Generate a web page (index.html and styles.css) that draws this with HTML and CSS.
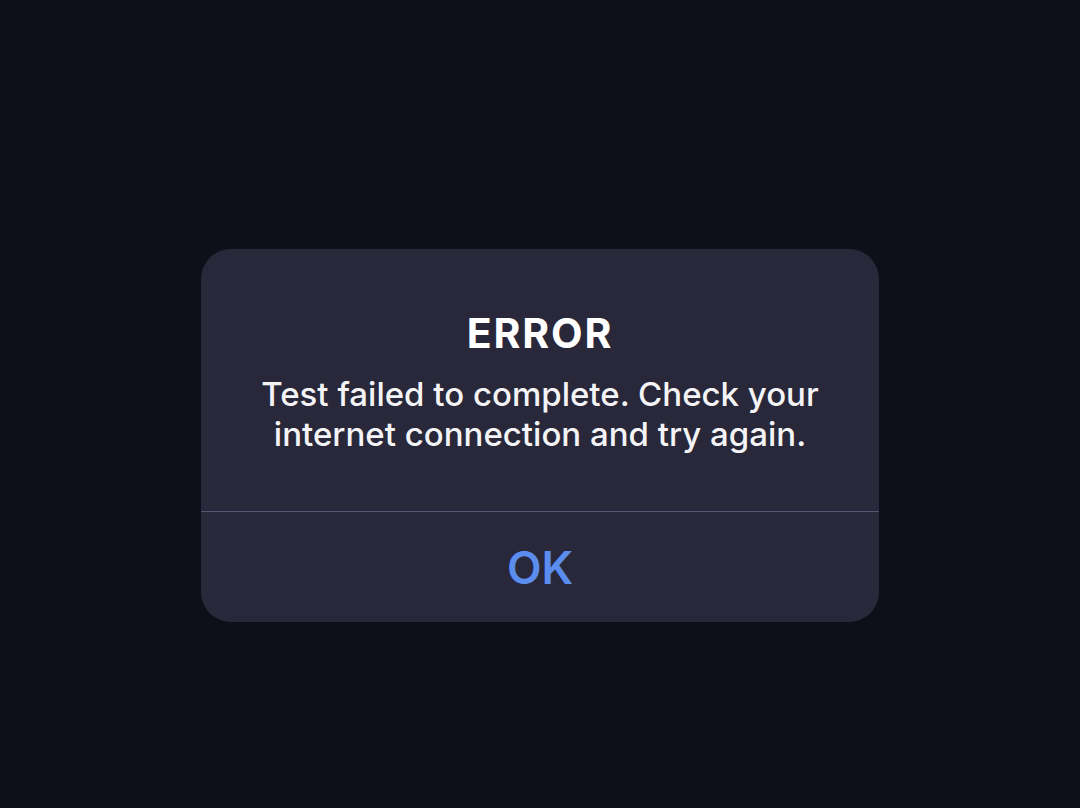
FILE: index.html
```html
<!DOCTYPE html>
<html lang="en">
<head>
<meta charset="utf-8">
<title>Error</title>
<link rel="stylesheet" href="styles.css">
</head>
<body>
  <div class="screen">
    <div class="alert" role="alertdialog">
      <div class="alert-body">
        <h1 class="alert-title">ERROR</h1>
        <p class="alert-message">Test failed to complete. Check your internet connection and try again.</p>
      </div>
      <button class="alert-button" type="button">OK</button>
    </div>
  </div>
</body>
</html>
```

FILE: styles.css
```css
html, body {
  margin: 0;
  padding: 0;
  background: #0f0f19;
}

.screen {
  width: 1080px;
  height: 808px;
  box-sizing: border-box;
  padding-top: 249px;
  display: flex;
  justify-content: center;
  align-items: flex-start;
  font-family: Inter, "Noto Sans", "Liberation Sans", sans-serif;
}

.alert {
  width: 678px;
  height: 373px;
  background: #28283a;
  border-radius: 30px;
  display: flex;
  flex-direction: column;
  overflow: hidden;
}

.alert-body {
  height: 263px;
  box-sizing: border-box;
  padding: 60px 40px 0;
  text-align: center;
  border-bottom: 1px solid #565672;
}

.alert-title {
  margin: 0;
  font-size: 41px;
  line-height: 48px;
  font-weight: 700;
  color: #ffffff;
  letter-spacing: 1.8px;
}

.alert-message {
  margin: 17px 0 0;
  font-size: 33px;
  line-height: 40px;
  font-weight: 500;
  color: #f4f4f6;
}

.alert-button {
  flex: 1;
  border: 0;
  background: transparent;
  color: #5b8def;
  font-family: inherit;
  font-size: 45px;
  font-weight: 600;
  padding: 0;
  cursor: pointer;
}
```
